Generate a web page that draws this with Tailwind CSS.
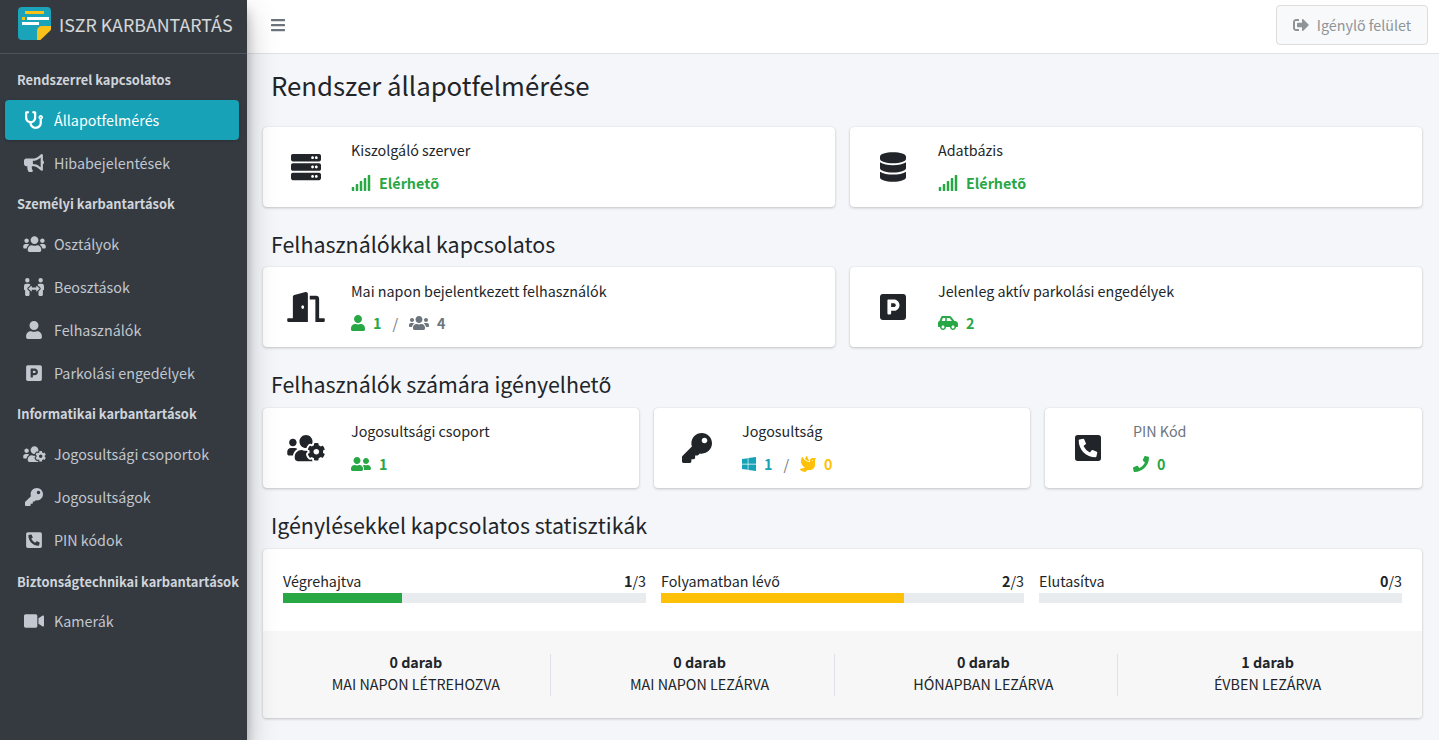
<!DOCTYPE html>
<html lang="hu">
<head>
    <meta charset="UTF-8">
    <meta name="viewport" content="width=device-width, initial-scale=1.0">
    <title>ISZR Karbantartás</title>
    <script src="https://cdn.jsdelivr.net/npm/@tailwindcss/browser@4"></script>
</head>
<body class="bg-[#f4f6f9] text-[#212529] text-[14.32px] font-['Noto_Sans_CJK_KR','Noto_Sans',sans-serif] overflow-hidden">
    <!-- ikonok -->
    <svg class="hidden" xmlns="http://www.w3.org/2000/svg">
        <symbol id="i-stethoscope" viewBox="0 0 512 512"><path d="M447.1 112c-34.2.5-62.3 28.4-63 62.6-.5 24.3 12.5 45.6 32 56.8V344c0 57.3-50.2 104-112 104-60 0-109.2-44.1-111.9-99.2C265 333.8 320 269.2 320 192V36.6c0-11.4-8.1-21.3-19.3-23.5L237.8.5c-13-2.6-25.6 5.8-28.2 18.8L206.4 35c-2.6 13 5.8 25.6 18.8 28.2l30.7 6.1v121.4c0 52.9-42.2 96.7-95.1 97.2-53.4.5-96.9-42.7-96.9-96V69.4l30.7-6.1c13-2.6 21.4-15.2 18.8-28.2l-3.1-15.7C107.7 6.4 95.1-2 82.1.6L19.3 13C8.1 15.3 0 25.1 0 36.6V192c0 77.3 55.1 142 128.1 156.8C130.7 439.2 208.6 512 304 512c97 0 176-75.4 176-168V231.4c19.1-11.1 32-31.7 32-55.4 0-35.7-29.2-64.5-64.9-64zm.9 80c-8.8 0-16-7.2-16-16s7.2-16 16-16 16 7.2 16 16-7.2 16-16 16z"/></symbol>
        <symbol id="i-bullhorn" viewBox="0 0 576 512"><path d="M576 240c0-23.63-12.95-44.04-32-55.12V32.01C544 23.26 537.02 0 512 0c-7.12 0-14.19 2.38-19.98 7.02l-85.03 68.03C364.28 109.19 310.66 128 256 128H64c-35.35 0-64 28.65-64 64v96c0 35.35 28.65 64 64 64h33.7c-1.39 10.48-2.18 21.14-2.18 32 0 39.77 9.26 77.35 25.56 110.94 5.19 10.69 16.52 17.06 28.4 17.06h74.28c26.05 0 41.69-29.84 25.9-50.56-16.4-21.52-26.15-48.36-26.15-77.44 0-11.11 1.62-21.79 4.41-32H256c54.66 0 108.28 18.81 150.98 52.95l85.03 68.03a32.023 32.023 0 0 0 19.98 7.02c24.92 0 32-22.78 32-32V295.13C563.05 284.04 576 263.63 576 240zm-96 141.42l-33.05-26.44C392.95 311.78 325.12 288 256 288v-96c69.12 0 136.95-23.78 190.95-66.98L480 98.58v282.84z"/></symbol>
        <symbol id="i-users" viewBox="0 0 640 512"><path d="M96 224c35.3 0 64-28.7 64-64s-28.7-64-64-64-64 28.7-64 64 28.7 64 64 64zm448 0c35.3 0 64-28.7 64-64s-28.7-64-64-64-64 28.7-64 64 28.7 64 64 64zm32 32h-64c-17.6 0-33.5 7.1-45.1 18.6 40.3 22.1 68.9 62 75.1 109.4h66c17.7 0 32-14.3 32-32v-32c0-35.3-28.7-64-64-64zm-256 0c61.9 0 112-50.1 112-112S381.9 32 320 32 208 82.1 208 144s50.1 112 112 112zm76.8 32h-8.3c-20.8 10-43.9 16-68.5 16s-47.6-6-68.5-16h-8.3C179.6 288 128 339.6 128 403.2V432c0 26.5 21.5 48 48 48h288c26.5 0 48-21.5 48-48v-28.8c0-63.6-51.6-115.2-115.2-115.2zm-223.7-13.4C161.5 263.1 145.6 256 128 256H64c-35.3 0-64 28.7-64 64v32c0 17.7 14.3 32 32 32h65.9c6.3-47.4 34.9-87.3 75.2-109.4z"/></symbol>
        <symbol id="i-people-arrows" viewBox="0 0 576 512"><path d="M96,128A64,64,0,1,0,32,64,64,64,0,0,0,96,128Zm0,176.08a44.11,44.11,0,0,1,13.64-32L181.77,204c1.65-1.55,3.77-2.31,5.61-3.57A63.91,63.91,0,0,0,128,160H64A64,64,0,0,0,0,224v96a32,32,0,0,0,32,32V480a32,32,0,0,0,32,32h64a32,32,0,0,0,32-32V383.61l-50.36-47.53A44.08,44.08,0,0,1,96,304.08ZM480,128a64,64,0,1,0-64-64A64,64,0,0,0,480,128Zm32,32H448a63.91,63.91,0,0,0-59.38,40.42c1.84,1.27,4,2,5.62,3.59l72.12,68.06a44.37,44.37,0,0,1,0,64L416,383.62V480a32,32,0,0,0,32,32h64a32,32,0,0,0,32-32V352a32,32,0,0,0,32-32V224A64,64,0,0,0,512,160ZM444.4,295.34l-72.12-68.06A12,12,0,0,0,352,236v36H224V236a12,12,0,0,0-20.28-8.73L131.6,295.34a12.4,12.4,0,0,0,0,17.47l72.12,68A12,12,0,0,0,224,372V336H352v36a12,12,0,0,0,20.28,8.75l72.12-68.07A12.4,12.4,0,0,0,444.4,295.34Z"/></symbol>
        <symbol id="i-user" viewBox="0 0 448 512"><path d="M224 256c70.7 0 128-57.3 128-128S294.7 0 224 0 96 57.3 96 128s57.3 128 128 128zm89.6 32h-16.7c-22.2 10.2-46.9 16-72.9 16s-50.6-5.8-72.9-16h-16.7C60.2 288 0 348.2 0 422.4V464c0 26.5 21.5 48 48 48h352c26.5 0 48-21.5 48-48v-41.6c0-74.2-60.2-134.4-134.4-134.4z"/></symbol>
        <symbol id="i-parking" viewBox="0 0 448 512"><path d="M400 32H48C21.5 32 0 53.5 0 80v352c0 26.5 21.5 48 48 48h352c26.5 0 48-21.5 48-48V80c0-26.5-21.5-48-48-48zM240 320h-48v48c0 8.8-7.2 16-16 16h-32c-8.8 0-16-7.2-16-16V144c0-8.8 7.2-16 16-16h96c52.9 0 96 43.1 96 96s-43.1 96-96 96zm0-128h-48v64h48c17.6 0 32-14.4 32-32s-14.4-32-32-32z"/></symbol>
        <symbol id="i-users-cog" viewBox="0 0 640 512"><path d="M610.5 341.3c2.6-14.1 2.6-28.5 0-42.6l25.8-14.9c3-1.7 4.3-5.2 3.3-8.5-6.7-21.6-18.2-41.2-33.2-57.4-2.3-2.5-6-3.1-9-1.4l-25.8 14.9c-10.9-9.3-23.4-16.5-36.9-21.3v-29.8c0-3.4-2.4-6.4-5.7-7.1-22.3-5-45-4.8-66.2 0-3.3.7-5.7 3.7-5.7 7.1v29.8c-13.5 4.8-26 12-36.9 21.3l-25.8-14.9c-2.9-1.7-6.7-1.1-9 1.4-15 16.2-26.5 35.8-33.2 57.4-1 3.3.4 6.8 3.3 8.5l25.8 14.9c-2.6 14.1-2.6 28.5 0 42.6l-25.8 14.9c-3 1.7-4.3 5.2-3.3 8.5 6.7 21.6 18.2 41.1 33.2 57.4 2.3 2.5 6 3.1 9 1.4l25.8-14.9c10.9 9.3 23.4 16.5 36.9 21.3v29.8c0 3.4 2.4 6.4 5.7 7.1 22.3 5 45 4.8 66.2 0 3.3-.7 5.7-3.7 5.7-7.1v-29.8c13.5-4.8 26-12 36.9-21.3l25.8 14.9c2.9 1.7 6.7 1.1 9-1.4 15-16.2 26.5-35.8 33.2-57.4 1-3.3-.4-6.8-3.3-8.5l-25.8-14.9zM496 368.5c-26.8 0-48.5-21.8-48.5-48.5s21.8-48.5 48.5-48.5 48.5 21.8 48.5 48.5-21.7 48.5-48.5 48.5zM96 224c35.3 0 64-28.7 64-64s-28.7-64-64-64-64 28.7-64 64 28.7 64 64 64zm224 32c1.9 0 3.7-.5 5.6-.6 8.3-21.7 20.5-42.1 36.3-59.2 7.4-8 17.9-12.6 28.9-12.6 6.9 0 13.7 1.8 19.6 5.3l7.9 4.6c.8-.5 1.6-.9 2.4-1.4 7-14.6 11.2-30.8 11.2-48 0-61.9-50.1-112-112-112S208 82.1 208 144c0 61.9 50.1 112 112 112zm105.2 194.5c-2.3-1.2-4.6-2.6-6.8-3.9-8.2 4.8-15.3 9.8-27.5 9.8-10.9 0-21.4-4.6-28.9-12.6-18.3-19.8-32.3-43.9-40.2-69.6-10.7-34.5 24.9-49.7 25.8-50.3-.1-2.6-.1-5.2 0-7.8l-7.9-4.6c-3.8-2.2-7-5-9.8-8.1-3.3.2-6.5.6-9.8.6-24.6 0-47.6-6-68.5-16h-8.3C179.6 288 128 339.6 128 403.2V432c0 26.5 21.5 48 48 48h255.4c-3.7-6-6.2-12.8-6.2-20.3v-9.2zM173.1 274.6C161.5 263.1 145.6 256 128 256H64c-35.3 0-64 28.7-64 64v32c0 17.7 14.3 32 32 32h65.9c6.3-47.4 34.9-87.3 75.2-109.4z"/></symbol>
        <symbol id="i-key" viewBox="0 0 512 512"><path d="M512 176.001C512 273.203 433.202 352 336 352c-11.22 0-22.19-1.062-32.827-3.069l-24.012 27.014A23.999 23.999 0 0 1 261.223 384H224v40c0 13.255-10.745 24-24 24h-40v40c0 13.255-10.745 24-24 24H24c-13.255 0-24-10.745-24-24v-78.059c0-6.365 2.529-12.47 7.029-16.971l161.802-161.802C163.108 213.814 160 195.271 160 176 160 78.798 238.797.001 335.999 0 433.488-.001 512 78.511 512 176.001zM336 128c0 26.51 21.49 48 48 48s48-21.49 48-48-21.49-48-48-48-48 21.49-48 48z"/></symbol>
        <symbol id="i-phone-square" viewBox="0 0 448 512"><path d="M400 32H48A48 48 0 0 0 0 80v352a48 48 0 0 0 48 48h352a48 48 0 0 0 48-48V80a48 48 0 0 0-48-48zm-16.39 307.37l-15 65A15 15 0 0 1 354 416C194 416 64 286.29 64 126a15.7 15.7 0 0 1 11.63-14.61l65-15A18.23 18.23 0 0 1 144 96a16.27 16.27 0 0 1 13.79 9.09l30 70A17.9 17.9 0 0 1 189 181a17 17 0 0 1-5.5 11.61l-37.89 31a231.91 231.91 0 0 0 110.78 110.78l31-37.89A17 17 0 0 1 299 291a17.85 17.85 0 0 1 5.91 1.21l70 30A16.25 16.25 0 0 1 384 336a17.41 17.41 0 0 1-.39 3.37z"/></symbol>
        <symbol id="i-video" viewBox="0 0 576 512"><path d="M336.2 64H47.8C21.4 64 0 85.4 0 111.8v288.4C0 426.6 21.4 448 47.8 448h288.4c26.4 0 47.8-21.4 47.8-47.8V111.8c0-26.4-21.4-47.8-47.8-47.8zm189.4 37.7L416 177.3v157.4l109.6 75.5c21.2 14.6 50.4-.3 50.4-25.8V127.5c0-25.4-29.1-40.4-50.4-25.8z"/></symbol>
        <symbol id="i-bars" viewBox="0 0 448 512"><path d="M16 132h416c8.837 0 16-7.163 16-16V76c0-8.837-7.163-16-16-16H16C7.163 60 0 67.163 0 76v40c0 8.837 7.163 16 16 16zm0 160h416c8.837 0 16-7.163 16-16v-40c0-8.837-7.163-16-16-16H16c-8.837 0-16 7.163-16 16v40c0 8.837 7.163 16 16 16zm0 160h416c8.837 0 16-7.163 16-16v-40c0-8.837-7.163-16-16-16H16c-8.837 0-16 7.163-16 16v40c0 8.837 7.163 16 16 16z"/></symbol>
        <symbol id="i-sign-out" viewBox="0 0 512 512"><path d="M497 273L329 441c-15 15-41 4.5-41-17v-96H152c-13.3 0-24-10.7-24-24v-96c0-13.3 10.7-24 24-24h136V88c0-21.4 25.9-32 41-17l168 168c9.3 9.4 9.3 24.6 0 34zM192 436v-40c0-6.6-5.4-12-12-12H96c-17.7 0-32-14.3-32-32V160c0-17.7 14.3-32 32-32h84c6.6 0 12-5.4 12-12V76c0-6.6-5.4-12-12-12H96c-53 0-96 43-96 96v192c0 53 43 96 96 96h84c6.6 0 12-5.4 12-12z"/></symbol>
        <symbol id="i-server" viewBox="0 0 512 512"><path d="M480 160H32c-17.673 0-32-14.327-32-32V64c0-17.673 14.327-32 32-32h448c17.673 0 32 14.327 32 32v64c0 17.673-14.327 32-32 32zm-48-88c-13.255 0-24 10.745-24 24s10.745 24 24 24 24-10.745 24-24-10.745-24-24-24zm-64 0c-13.255 0-24 10.745-24 24s10.745 24 24 24 24-10.745 24-24-10.745-24-24-24zm112 248H32c-17.673 0-32-14.327-32-32v-64c0-17.673 14.327-32 32-32h448c17.673 0 32 14.327 32 32v64c0 17.673-14.327 32-32 32zm-48-88c-13.255 0-24 10.745-24 24s10.745 24 24 24 24-10.745 24-24-10.745-24-24-24zm-64 0c-13.255 0-24 10.745-24 24s10.745 24 24 24 24-10.745 24-24-10.745-24-24-24zm112 248H32c-17.673 0-32-14.327-32-32v-64c0-17.673 14.327-32 32-32h448c17.673 0 32 14.327 32 32v64c0 17.673-14.327 32-32 32zm-48-88c-13.255 0-24 10.745-24 24s10.745 24 24 24 24-10.745 24-24-10.745-24-24-24zm-64 0c-13.255 0-24 10.745-24 24s10.745 24 24 24 24-10.745 24-24-10.745-24-24-24z"/></symbol>
        <symbol id="i-database" viewBox="0 0 448 512"><path d="M448 73.143v45.714C448 159.143 347.667 192 224 192S0 159.143 0 118.857V73.143C0 32.857 100.333 0 224 0s224 32.857 224 73.143zM448 176v102.857C448 319.143 347.667 352 224 352S0 319.143 0 278.857V176c48.125 33.143 136.208 48.572 224 48.572S399.874 209.143 448 176zm0 160v102.857C448 479.143 347.667 512 224 512S0 479.143 0 438.857V336c48.125 33.143 136.208 48.572 224 48.572S399.874 369.143 448 336z"/></symbol>
        <symbol id="i-door" viewBox="0 0 640 512"><path d="M624 448h-80V113.45C544 86.19 522.47 64 496 64H384v64h96v384h144c8.84 0 16-7.16 16-16v-32c0-8.84-7.16-16-16-16zM312.24 1.01l-192 49.74C105.99 54.44 96 67.7 96 82.92V448H16c-8.84 0-16 7.16-16 16v32c0 8.84 7.16 16 16 16h336V33.18c0-21.58-19.56-37.41-39.76-32.17zM264 288c-13.25 0-24-14.33-24-32s10.75-32 24-32 24 14.33 24 32-10.75 32-24 32z"/></symbol>
        <symbol id="i-signal" viewBox="0 0 640 512"><path d="M216 288h-48c-8.84 0-16 7.16-16 16v192c0 8.84 7.16 16 16 16h48c8.84 0 16-7.16 16-16V304c0-8.84-7.16-16-16-16zM88 384H40c-8.84 0-16 7.16-16 16v96c0 8.84 7.16 16 16 16h48c8.84 0 16-7.16 16-16v-96c0-8.84-7.16-16-16-16zm256-192h-48c-8.84 0-16 7.16-16 16v288c0 8.84 7.16 16 16 16h48c8.84 0 16-7.16 16-16V208c0-8.84-7.16-16-16-16zm128-96h-48c-8.84 0-16 7.16-16 16v384c0 8.84 7.16 16 16 16h48c8.84 0 16-7.16 16-16V112c0-8.84-7.16-16-16-16zM600 0h-48c-8.84 0-16 7.16-16 16v480c0 8.84 7.16 16 16 16h48c8.84 0 16-7.16 16-16V16c0-8.84-7.16-16-16-16z"/></symbol>
        <symbol id="i-car" viewBox="0 0 640 512"><path d="M544 192h-16L419.22 56.02A64.025 64.025 0 0 0 369.24 32H155.33c-26.17 0-49.7 15.93-59.42 40.23L48 194.26C20.44 201.4 0 226.21 0 256v112c0 8.84 7.16 16 16 16h48c0 53.02 42.98 96 96 96s96-42.98 96-96h128c0 53.02 42.98 96 96 96s96-42.98 96-96h48c8.84 0 16-7.16 16-16v-80c0-53.02-42.98-96-96-96zM160 432c-26.47 0-48-21.53-48-48s21.53-48 48-48 48 21.53 48 48-21.53 48-48 48zm72-240H116.93l38.4-96H232v96zm48 0V96h89.24l76.8 96H280zm200 240c-26.47 0-48-21.53-48-48s21.53-48 48-48 48 21.53 48 48-21.53 48-48 48z"/></symbol>
        <symbol id="i-user-friends" viewBox="0 0 640 512"><path d="M192 256c61.9 0 112-50.1 112-112S253.9 32 192 32 80 82.1 80 144s50.1 112 112 112zm76.8 32h-8.3c-20.8 10-43.9 16-68.5 16s-47.6-6-68.5-16h-8.3C51.6 288 0 339.6 0 403.2V432c0 26.5 21.5 48 48 48h288c26.5 0 48-21.5 48-48v-28.8c0-63.6-51.6-115.2-115.2-115.2zM480 256c53 0 96-43 96-96s-43-96-96-96-96 43-96 96 43 96 96 96zm48 32h-3.8c-13.9 4.8-28.6 8-44.2 8s-30.3-3.2-44.2-8H432c-20.4 0-39.2 5.9-55.7 15.4 24.4 26.3 39.7 61.2 39.7 99.8v38.4c0 2.2-.5 4.3-.6 6.4H592c26.5 0 48-21.5 48-48 0-61.9-50.1-112-112-112z"/></symbol>
        <symbol id="i-windows" viewBox="0 0 448 512"><path d="M0 93.7l183.6-25.3v177.4H0V93.7zm0 324.6l183.6 25.3V268.4H0v149.9zm203.8 28L448 480V268.4H203.8v177.9zm0-380.6v180.1H448V32L203.8 65.7z"/></symbol>
        <symbol id="i-dove" viewBox="0 0 512 512"><path d="M288 167.2v-28.1c-28.2-36.3-47.1-79.3-54.1-125.2-2.1-13.5-19-18.8-27.8-8.3-21.1 24.9-37.7 54.1-48.9 86.5 34.2 38.3 80 64.6 130.8 75.1zM400 64c-44.2 0-80 35.9-80 80.1v59.4C215.6 197.3 127 133 87 41.8c-5.5-12.5-23.2-13.2-29-.9C41.4 76 32 115.2 32 156.6c0 70.8 34.1 136.9 85.1 185.9 13.2 12.7 26.1 23.2 38.9 32.8l-143.9 36C1.4 414-3.4 426.4 2.6 435.7 20 462.6 63 508.2 155.8 512c8 .3 16-2.6 22.1-7.9l65.2-56.1H320c88.4 0 160-71.5 160-159.9V128l32-64H400zm0 96.1c-8.8 0-16-7.2-16-16s7.2-16 16-16 16 7.2 16 16-7.2 16-16 16z"/></symbol>
        <symbol id="i-phone" viewBox="0 0 512 512"><path d="M493.4 24.6l-104-24c-11.3-2.6-22.9 3.3-27.5 13.9l-48 112c-4.2 9.8-1.4 21.3 6.9 28l60.6 49.6c-36 76.7-98.9 140.5-177.2 177.2l-49.6-60.6c-6.8-8.3-18.2-11.1-28-6.9l-112 48C3.9 366.5-2 378.1.6 389.4l24 104C27.1 504.2 36.7 512 48 512c256.1 0 464-207.5 464-464 0-11.2-7.7-20.9-18.6-23.4z"/></symbol>
    </svg>

    <div class="flex h-[740px]">
        <!-- oldalsáv -->
        <aside class="w-[247px] shrink-0 h-full bg-[#343a40] text-[#c2c7d0] shadow-[0_14px_28px_rgba(0,0,0,0.25),0_10px_10px_rgba(0,0,0,0.22)] relative">
            <div class="h-[54px] border-b border-[#4b545c] flex items-center pl-[18px]">
                <svg class="w-[33px] h-[33px] mb-[6px] shrink-0" viewBox="0 0 33 33">
                    <path d="M4 0h25a4 4 0 0 1 4 4v15L19 33H4a4 4 0 0 1-4-4V4a4 4 0 0 1 4-4z" fill="#1aa3b9"/>
                    <path d="M33 19v3a2 2 0 0 1-.6 1.4L22.4 33H19v-9a5 5 0 0 1 5-5z" fill="#f9c21a"/>
                    <rect x="7" y="4" width="19" height="3" fill="#f9c21a"/>
                    <rect x="4" y="10" width="3" height="3" fill="#f9c21a"/>
                    <rect x="9" y="10" width="22" height="3" fill="#fff"/>
                    <rect x="4" y="15" width="17" height="3" fill="#fff"/>
                </svg>
                <span class="ml-2 mb-1 text-[17.8px] text-white/80 whitespace-nowrap">ISZR KARBANTARTÁS</span>
            </div>
            <nav class="pt-2 pl-[5px] pr-2">
                <div class="h-[37px] pb-[2px] pl-3 flex items-center text-[12.85px] font-bold text-[#d0d4db] whitespace-nowrap">Rendszerrel kapcsolatos</div>
                <a class="h-10 mt-px mb-[3px] flex items-center rounded bg-[#17a2b8] text-white shadow-[0_1px_3px_rgba(0,0,0,0.2)]">
                    <span class="w-[26px] ml-4 mr-[7px] flex justify-center"><svg class="h-[18px] w-[18px] fill-current"><use href="#i-stethoscope"/></svg></span>Állapotfelmérés
                </a>
                <a class="h-10 mb-[3px] flex items-center">
                    <span class="w-[26px] ml-4 mr-[7px] flex justify-center"><svg class="h-[18px] w-[20px] fill-current"><use href="#i-bullhorn"/></svg></span>Hibabejelentések
                </a>
                <div class="h-[37px] pb-[2px] pl-3 flex items-center text-[12.85px] font-bold text-[#d0d4db] whitespace-nowrap">Személyi karbantartások</div>
                <a class="h-10 mt-px mb-[3px] flex items-center">
                    <span class="w-[26px] ml-4 mr-[7px] flex justify-center"><svg class="h-[18px] w-[23px] fill-current"><use href="#i-users"/></svg></span>Osztályok
                </a>
                <a class="h-10 mb-[3px] flex items-center">
                    <span class="w-[26px] ml-4 mr-[7px] flex justify-center"><svg class="h-[18px] w-[20px] fill-current"><use href="#i-people-arrows"/></svg></span>Beosztások
                </a>
                <a class="h-10 mb-[3px] flex items-center">
                    <span class="w-[26px] ml-4 mr-[7px] flex justify-center"><svg class="h-[18px] w-4 fill-current"><use href="#i-user"/></svg></span>Felhasználók
                </a>
                <a class="h-10 mb-[3px] flex items-center">
                    <span class="w-[26px] ml-4 mr-[7px] flex justify-center"><svg class="h-[18px] w-4 fill-current"><use href="#i-parking"/></svg></span>Parkolási engedélyek
                </a>
                <div class="h-[37px] pb-[2px] pl-3 flex items-center text-[12.85px] font-bold text-[#d0d4db] whitespace-nowrap">Informatikai karbantartások</div>
                <a class="h-10 mt-px mb-[3px] flex items-center">
                    <span class="w-[26px] ml-4 mr-[7px] flex justify-center"><svg class="h-[18px] w-[23px] fill-current"><use href="#i-users-cog"/></svg></span>Jogosultsági csoportok
                </a>
                <a class="h-10 mb-[3px] flex items-center">
                    <span class="w-[26px] ml-4 mr-[7px] flex justify-center"><svg class="h-[18px] w-[18px] fill-current"><use href="#i-key"/></svg></span>Jogosultságok
                </a>
                <a class="h-10 mb-[3px] flex items-center">
                    <span class="w-[26px] ml-4 mr-[7px] flex justify-center"><svg class="h-[18px] w-4 fill-current"><use href="#i-phone-square"/></svg></span>PIN kódok
                </a>
                <div class="h-[37px] pl-3 flex items-center text-[12.85px] font-bold text-[#d0d4db] whitespace-nowrap">Biztonságtechnikai karbantartások</div>
                <a class="h-10 mt-px mb-[3px] flex items-center">
                    <span class="w-[26px] ml-4 mr-[7px] flex justify-center"><svg class="h-[18px] w-[20px] fill-current"><use href="#i-video"/></svg></span>Kamerák
                </a>
            </nav>
        </aside>

        <div class="flex-1 min-w-0">
            <!-- felső sáv -->
            <header class="h-[54px] bg-white border-b border-[#dee2e6] flex items-center justify-between pl-6 pr-[11px]">
                <svg class="w-[14px] h-4 mb-[3px] fill-[#6c757d]"><use href="#i-bars"/></svg>
                <button class="w-[152px] h-10 mb-[3px] flex items-center justify-center rounded border border-[#ddd] bg-[#f8f9fa] text-[#8f9499]">
                    <svg class="w-4 h-4 mr-2 fill-current"><use href="#i-sign-out"/></svg>Igénylő felület
                </button>
            </header>

            <main class="pl-4 pr-[17px]">
                <h1 class="pl-2 pt-[14px] h-[73px] text-[25.75px] leading-[34px]">Rendszer állapotfelmérése</h1>

                <div class="grid grid-cols-2 gap-[15px]">
                    <div class="h-20 bg-white rounded shadow-[0_0_1px_rgba(0,0,0,0.125),0_1px_3px_rgba(0,0,0,0.2)] flex">
                        <div class="w-[86px] mr-[2px] shrink-0 flex items-center justify-center"><svg class="w-[30px] h-[30px] fill-[#212529]"><use href="#i-server"/></svg></div>
                        <div class="pt-3">
                            <div class="h-6 leading-[22px]">Kiszolgáló szerver</div>
                            <div class="h-6 mt-2 flex items-center font-bold text-[#28a745]"><svg class="w-5 h-4 mr-2 fill-current"><use href="#i-signal"/></svg>Elérhető</div>
                        </div>
                    </div>
                    <div class="h-20 bg-white rounded shadow-[0_0_1px_rgba(0,0,0,0.125),0_1px_3px_rgba(0,0,0,0.2)] flex">
                        <div class="w-[86px] mr-[2px] shrink-0 flex items-center justify-center"><svg class="w-[26px] h-[30px] fill-[#212529]"><use href="#i-database"/></svg></div>
                        <div class="pt-3">
                            <div class="h-6 leading-[22px]">Adatbázis</div>
                            <div class="h-6 mt-2 flex items-center font-bold text-[#28a745]"><svg class="w-5 h-4 mr-2 fill-current"><use href="#i-signal"/></svg>Elérhető</div>
                        </div>
                    </div>
                </div>

                <h2 class="pl-2 mt-[23px] mb-[9px] h-7 text-[21.4px] leading-7">Felhasználókkal kapcsolatos</h2>
                <div class="grid grid-cols-2 gap-[15px]">
                    <div class="h-20 bg-white rounded shadow-[0_0_1px_rgba(0,0,0,0.125),0_1px_3px_rgba(0,0,0,0.2)] flex">
                        <div class="w-[86px] mr-[2px] shrink-0 flex items-center justify-center"><svg class="w-[38px] h-[30px] fill-[#212529]"><use href="#i-door"/></svg></div>
                        <div class="pt-3">
                            <div class="h-6 leading-6">Mai napon bejelentkezett felhasználók</div>
                            <div class="h-6 mt-2 flex items-center font-bold">
                                <svg class="w-[14px] h-4 mr-2 fill-[#28a745]"><use href="#i-user"/></svg><span class="text-[#28a745]">1</span>
                                <span class="mx-[11px] font-normal text-[#6c757d]">/</span>
                                <svg class="w-5 h-4 mr-2 fill-[#6c757d]"><use href="#i-users"/></svg><span class="text-[#6c757d]">4</span>
                            </div>
                        </div>
                    </div>
                    <div class="h-20 bg-white rounded shadow-[0_0_1px_rgba(0,0,0,0.125),0_1px_3px_rgba(0,0,0,0.2)] flex">
                        <div class="w-[86px] mr-[2px] shrink-0 flex items-center justify-center"><svg class="w-[26px] h-[30px] fill-[#212529]"><use href="#i-parking"/></svg></div>
                        <div class="pt-3">
                            <div class="h-6 leading-6">Jelenleg aktív parkolási engedélyek</div>
                            <div class="h-6 mt-2 flex items-center font-bold text-[#28a745]"><svg class="w-5 h-4 mr-2 fill-current"><use href="#i-car"/></svg>2</div>
                        </div>
                    </div>
                </div>

                <h2 class="pl-2 mt-[23px] mb-[10px] h-7 text-[21.4px] leading-7">Felhasználók számára igényelhető</h2>
                <div class="grid grid-cols-[376px_376px_1fr] gap-[15px]">
                    <div class="h-20 bg-white rounded shadow-[0_0_1px_rgba(0,0,0,0.125),0_1px_3px_rgba(0,0,0,0.2)] flex">
                        <div class="w-[86px] mr-[2px] shrink-0 flex items-center justify-center"><svg class="w-[38px] h-[30px] fill-[#212529]"><use href="#i-users-cog"/></svg></div>
                        <div class="pt-3">
                            <div class="h-6 leading-[22px]">Jogosultsági csoport</div>
                            <div class="h-6 mt-2 flex items-center font-bold text-[#28a745]"><svg class="w-5 h-4 mr-2 fill-current"><use href="#i-user-friends"/></svg>1</div>
                        </div>
                    </div>
                    <div class="h-20 bg-white rounded shadow-[0_0_1px_rgba(0,0,0,0.125),0_1px_3px_rgba(0,0,0,0.2)] flex">
                        <div class="w-[86px] mr-[2px] shrink-0 flex items-center justify-center"><svg class="w-[30px] h-[30px] fill-[#212529]"><use href="#i-key"/></svg></div>
                        <div class="pt-3">
                            <div class="h-6 leading-[22px]">Jogosultság</div>
                            <div class="h-6 mt-2 flex items-center font-bold">
                                <svg class="w-[14px] h-4 mr-2 fill-[#17a2b8]"><use href="#i-windows"/></svg><span class="text-[#17a2b8]">1</span>
                                <span class="mx-[11px] font-normal text-[#6c757d]">/</span>
                                <svg class="w-4 h-4 mr-2 fill-[#ffc107]"><use href="#i-dove"/></svg><span class="text-[#ffc107]">0</span>
                            </div>
                        </div>
                    </div>
                    <div class="h-20 bg-white rounded shadow-[0_0_1px_rgba(0,0,0,0.125),0_1px_3px_rgba(0,0,0,0.2)] flex">
                        <div class="w-[86px] mr-[2px] shrink-0 flex items-center justify-center"><svg class="w-[26px] h-[30px] fill-[#212529]"><use href="#i-phone-square"/></svg></div>
                        <div class="pt-3">
                            <div class="h-6 leading-[22px] text-[#6c757d]">PIN Kód</div>
                            <div class="h-6 mt-2 flex items-center font-bold text-[#28a745]"><svg class="w-4 h-4 mr-2 fill-current"><use href="#i-phone"/></svg>0</div>
                        </div>
                    </div>
                </div>

                <h2 class="pl-2 mt-[23px] mb-[10px] h-7 text-[21.4px] leading-7">Igénylésekkel kapcsolatos statisztikák</h2>
                <div class="h-[169px] bg-white rounded shadow-[0_0_1px_rgba(0,0,0,0.125),0_1px_3px_rgba(0,0,0,0.2)] overflow-hidden">
                    <div class="h-[82px] px-5 pt-[21px] grid grid-cols-3 gap-[15px]">
                        <div>
                            <div class="flex justify-between h-6 leading-[22px]"><span>Végrehajtva</span><span><b>1</b>/3</span></div>
                            <div class="h-[10px] -mt-px bg-[#e9ecef]"><div class="h-full bg-[#28a745]" style="width:32.8%"></div></div>
                        </div>
                        <div>
                            <div class="flex justify-between h-6 leading-[22px]"><span>Folyamatban lévő</span><span><b>2</b>/3</span></div>
                            <div class="h-[10px] -mt-px bg-[#e9ecef]"><div class="h-full bg-[#ffc107]" style="width:67%"></div></div>
                        </div>
                        <div>
                            <div class="flex justify-between h-6 leading-[22px]"><span>Elutasítva</span><span><b>0</b>/3</span></div>
                            <div class="h-[10px] -mt-px bg-[#e9ecef]"><div class="h-0 bg-[#dc3545]" style="width:0%"></div></div>
                        </div>
                    </div>
                    <div class="h-[87px] bg-[#f7f7f7] pl-[19px] pr-5 pt-[23px] grid grid-cols-4 gap-[15px]">
                        <div class="h-[42px] border-r border-[#dee2e6] text-center"><div class="font-bold leading-4">0 darab</div><div class="leading-[28px]">MAI NAPON LÉTREHOZVA</div></div>
                        <div class="h-[42px] border-r border-[#dee2e6] text-center"><div class="font-bold leading-4">0 darab</div><div class="leading-[28px]">MAI NAPON LEZÁRVA</div></div>
                        <div class="h-[42px] border-r border-[#dee2e6] text-center"><div class="font-bold leading-4">0 darab</div><div class="leading-[28px]">HÓNAPBAN LEZÁRVA</div></div>
                        <div class="h-[42px] text-center"><div class="font-bold leading-4">1 darab</div><div class="leading-[28px]">ÉVBEN LEZÁRVA</div></div>
                    </div>
                </div>
            </main>
        </div>
    </div>
</body>
</html>
